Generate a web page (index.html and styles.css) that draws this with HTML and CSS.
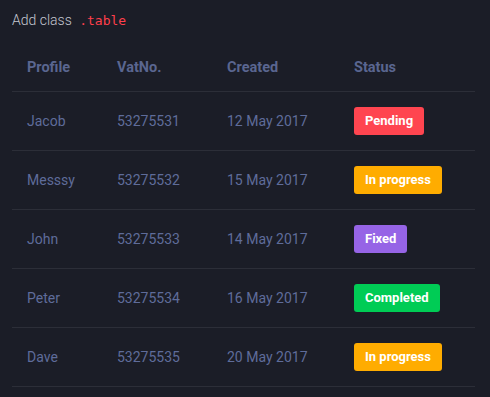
FILE: index.html
```html
<!DOCTYPE html>
<html>
<head>
<meta charset="utf-8">
<link rel="stylesheet" href="styles.css">
</head>
<body>
<div class="page">
  <div class="title">Add class <code class="code">.table</code></div>
  <table class="table">
    <colgroup>
      <col class="c1"><col class="c2"><col class="c3"><col class="c4">
    </colgroup>
    <thead>
      <tr><th>Profile</th><th>VatNo.</th><th>Created</th><th>Status</th></tr>
    </thead>
    <tbody>
      <tr><td>Jacob</td><td>53275531</td><td>12 May 2017</td><td><span class="badge red">Pending</span></td></tr>
      <tr><td>Messsy</td><td>53275532</td><td>15 May 2017</td><td><span class="badge orange">In progress</span></td></tr>
      <tr><td>John</td><td>53275533</td><td>14 May 2017</td><td><span class="badge purple">Fixed</span></td></tr>
      <tr><td>Peter</td><td>53275534</td><td>16 May 2017</td><td><span class="badge green">Completed</span></td></tr>
      <tr><td>Dave</td><td>53275535</td><td>20 May 2017</td><td><span class="badge orange">In progress</span></td></tr>
    </tbody>
  </table>
</div>
</body>
</html>
```
FILE: styles.css
```css
html, body {
  margin: 0;
  padding: 0;
  background: #1b1d27;
}
.page {
  padding: 10px 15px 0 12px;
  font-family: Roboto, "Liberation Sans", sans-serif;
}
.title {
  font-size: 14px;
  line-height: 20px;
  color: #c3c6cf;
  font-weight: 300;
}
.code {
  font-family: "DejaVu Sans Mono", "Liberation Mono", monospace;
  font-size: 13px;
  color: #ff3f4b;
  margin-left: 4px;
}
.table {
  margin-top: 13px;
  width: 463px;
  border-collapse: collapse;
  table-layout: fixed;
}
.c1 { width: 90px; }
.c2 { width: 110px; }
.c3 { width: 127px; }
.c4 { width: 136px; }
.table th {
  text-align: left;
  font-size: 14.5px;
  line-height: 17px;
  font-weight: 700;
  color: #5a6690;
  padding: 15px 15px;
  border-bottom: 1px solid #2c2e38;
}
.table td {
  font-size: 14px;
  line-height: 17px;
  color: #5f6c9a;
  padding: 15px 15px;
  height: 28px;
  vertical-align: middle;
  border-bottom: 1px solid #2c2e38;
}
.badge {
  display: inline-block;
  height: 28px;
  line-height: 28px;
  padding: 0 11px;
  border-radius: 3px;
  font-size: 13px;
  font-weight: 700;
  color: #ffffff;
}
.red { background: #ff4550; }
.orange { background: #ffac00; }
.purple { background: #9664e6; }
.green { background: #00cc55; }
```
